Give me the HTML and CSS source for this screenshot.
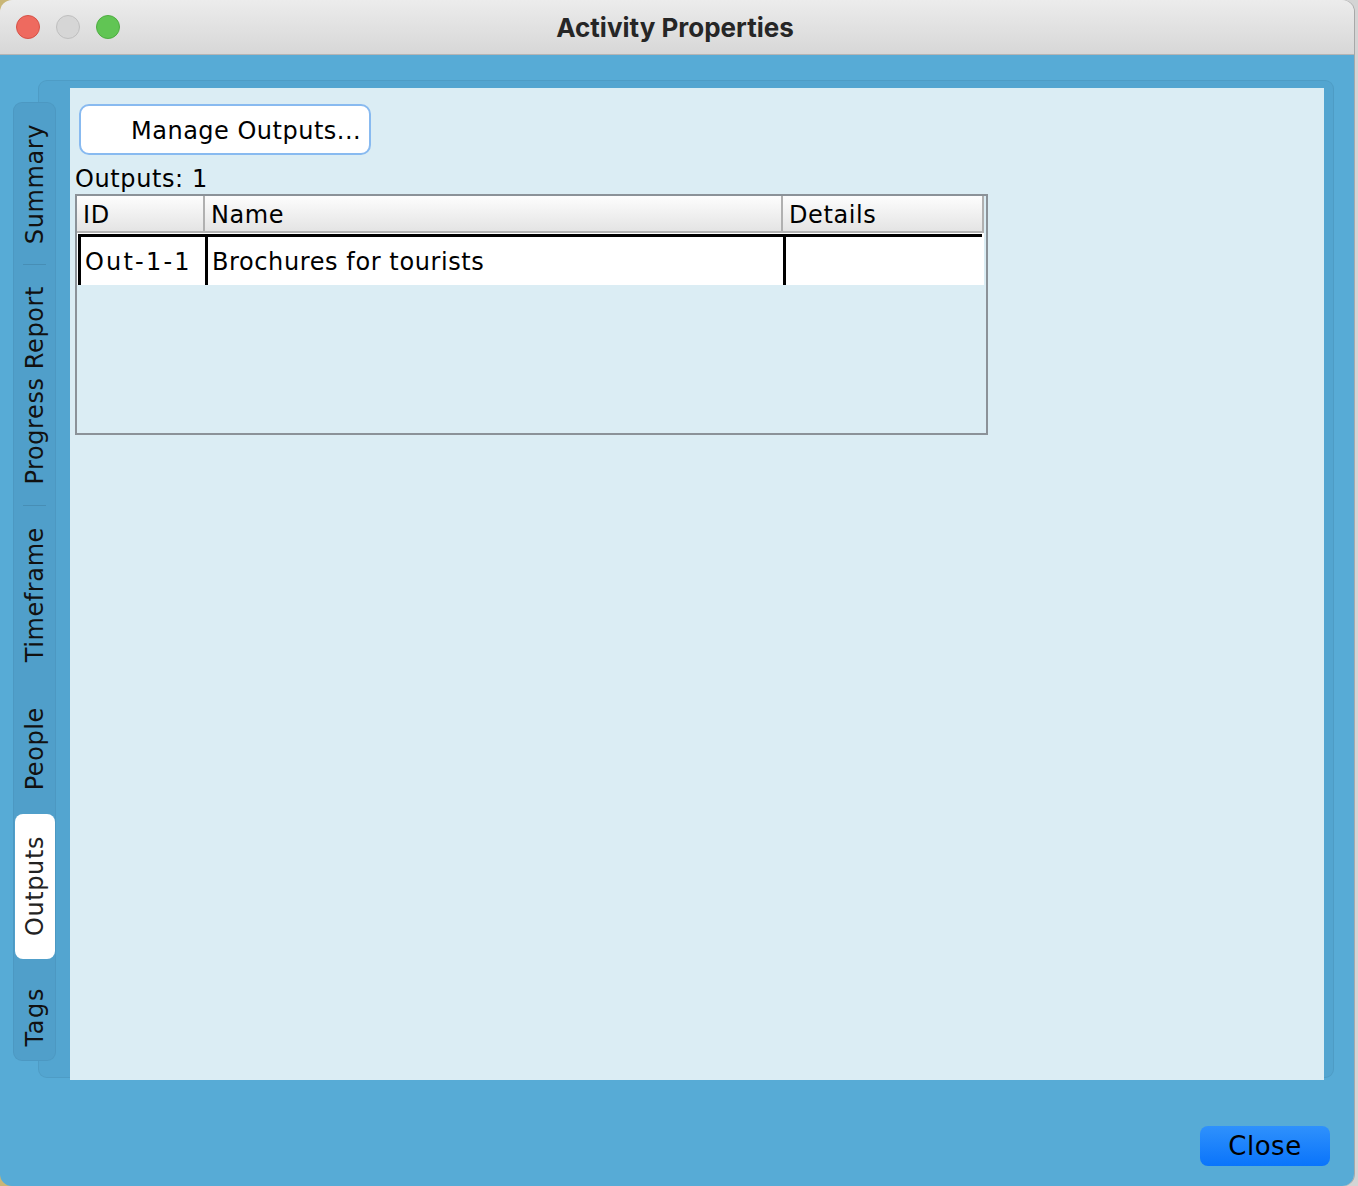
FILE: index.html
```html
<!DOCTYPE html>
<html>
<head>
<meta charset="utf-8">
<title>Activity Properties</title>
<link rel="stylesheet" href="styles.css">
</head>
<body>
<div class="window">
  <div class="titlebar">
    <div class="lights">
      <span class="light red"></span>
      <span class="light gray"></span>
      <span class="light green"></span>
    </div>
    <div class="title">Activity Properties</div>
  </div>
  <div class="body">
    <div class="tabarea">
      <div class="tabstrip">
        <div class="tab sep"><span class="tablabel">Summary</span></div>
        <div class="tab sep"><span class="tablabel">Progress Report</span></div>
        <div class="tab"><span class="tablabel">Timeframe</span></div>
        <div class="tab people"><span class="tablabel">People</span></div>
        <div class="tab selected"><span class="tablabel">Outputs</span></div>
        <div class="tab last"><span class="tablabel">Tags</span></div>
      </div>
      <div class="pane">
        <div class="content">
          <button class="manage">Manage Outputs...</button>
          <div class="count">Outputs: 1</div>
          <div class="table">
            <div class="thead">
              <div class="th c-id">ID</div>
              <div class="th c-name">Name</div>
              <div class="th c-det">Details</div>
            </div>
            <div class="row">
              <div class="td c-id">Out-1-1</div>
              <div class="td c-name">Brochures for tourists</div>
              <div class="td c-det"></div>
            </div>
          </div>
        </div>
      </div>
    </div>
    <div class="footer">
      <button class="close">Close</button>
    </div>
  </div>
</div>
</body>
</html>
```

FILE: styles.css
```css
html, body {
  margin: 0;
  padding: 0;
}
body {
  width: 1358px;
  height: 1186px;
  background: linear-gradient(to right, #c9b676 0, #c9b676 20px, #d4d4d4 20px);
  overflow: hidden;
  font-family: "DejaVu Sans", "Liberation Sans", sans-serif;
  color: #000;
  letter-spacing: 0.6px;
}
.window {
  width: 1354px;
  height: 1186px;
  border-radius: 12px;
  overflow: hidden;
  display: flex;
  flex-direction: column;
  box-shadow: 1px 0 0 #a8a8a8;
}
.titlebar {
  height: 54px;
  flex: none;
  background: linear-gradient(#ececec, #d7d7d7);
  border-bottom: 1px solid #b4b4b4;
  display: flex;
  align-items: center;
}
.lights {
  display: flex;
  gap: 16px;
  padding-left: 16px;
}
.light {
  width: 24px;
  height: 24px;
  border-radius: 50%;
  box-sizing: border-box;
}
.light.red { background: #ee6a5f; border: 1px solid #d65247; }
.light.gray { background: #d6d6d6; border: 1px solid #bfbfbf; }
.light.green { background: #61c554; border: 1px solid #4ead41; }
.title {
  flex: 1;
  text-align: center;
  margin-left: -124px;
  font-family: Inter, "Liberation Sans", sans-serif;
  font-weight: 700;
  font-size: 26px;
  color: #262626;
  letter-spacing: 0;
}
.body {
  flex: 1;
  background: #57abd6;
  display: flex;
  flex-direction: column;
}
.tabarea {
  display: flex;
  padding: 25px 20px 0 13px;
}
.tabstrip {
  width: 43px;
  margin-top: 22px;
  height: 959px;
  flex: none;
  box-sizing: border-box;
  background: #509fca;
  border: 1px solid rgba(0, 0, 0, 0.04);
  border-radius: 9px;
  display: flex;
  flex-direction: column;
  position: relative;
  z-index: 1;
}
.tab {
  padding: 21px 0;
  display: flex;
  justify-content: center;
  position: relative;
}
.tab.people { padding: 24px 0; }
.tab.last { padding: 28px 0 0; }
.tab.sep::after {
  content: "";
  position: absolute;
  left: 9px;
  right: 9px;
  bottom: 0;
  height: 1px;
  background: rgba(0, 0, 0, 0.1);
}
.tab.selected {
  background: #fff;
  border-radius: 8px;
  margin: 0 0 0 1px;
  width: 40px;
  padding: 22px 0;
}
.tablabel {
  writing-mode: vertical-rl;
  transform: rotate(180deg);
  font-size: 24px;
  line-height: 28px;
  color: #111;
}
.tab.last .tablabel { letter-spacing: 1.6px; }
.tab.selected .tablabel { color: #222; }
.pane {
  flex: 1;
  margin-left: -18px;
  height: 998px;
  background: #53a5d0;
  border: 1px solid rgba(0, 0, 0, 0.05);
  border-radius: 9px;
  box-sizing: border-box;
  padding: 7px 9px 0 31px;
}
.content {
  background: #dbedf4;
  height: 992px;
  padding: 16px 0 0 5px;
  box-sizing: border-box;
}
.manage {
  display: block;
  margin-left: 4px;
  width: 292px;
  height: 51px;
  background: #fff;
  border: 2px solid #88baf0;
  border-radius: 10px;
  font-family: "DejaVu Sans", sans-serif;
  font-size: 24px;
  letter-spacing: 0.5px;
  color: #000;
  text-align: left;
  padding: 2px 0 0 50px;
  box-sizing: border-box;
}
.count {
  font-size: 24px;
  line-height: 28px;
  margin-top: 10px;
  height: 29px;
}
.table {
  width: 913px;
  height: 241px;
  box-sizing: border-box;
  border: 2px solid #8b9298;
  padding-right: 2px;
}
.thead {
  display: flex;
  height: 37px;
  background: linear-gradient(#fdfdfd, #e4e4e4);
  border-bottom: 2px solid #b4b4b4;
  box-sizing: border-box;
  border-right: 2px solid #b0b0b0;
}
.th {
  font-size: 24px;
  line-height: 38px;
  padding-left: 6px;
  box-sizing: border-box;
  border-right: 2px solid #b0b0b0;
}
.th.c-det { border-right: none; }
.c-id { width: 128px; }
.c-name { width: 578px; }
.c-det { flex: 1; }
.row {
  display: flex;
  height: 52px;
  background: #fff;
}
.td {
  font-size: 24px;
  line-height: 50px;
  border-top: 3px solid #000;
  border-left: 3px solid #000;
  box-sizing: border-box;
  padding-left: 4px;
  height: 51px;
  margin-top: 1px;
  white-space: nowrap;
}
.td.c-id { margin-left: 1px; width: 127px; letter-spacing: 2.2px; }
.td.c-name { width: 578px; }
.td.c-det { margin-right: 2px; }
.footer {
  display: flex;
  justify-content: flex-end;
  padding: 48px 24px 0 0;
}
.close {
  width: 130px;
  height: 40px;
  border: none;
  border-radius: 8px;
  background: linear-gradient(#2f91fc, #0a74fb);
  font-family: "DejaVu Sans", sans-serif;
  font-size: 26px;
  letter-spacing: 0.5px;
  color: #000;
  padding: 0;
}
```
